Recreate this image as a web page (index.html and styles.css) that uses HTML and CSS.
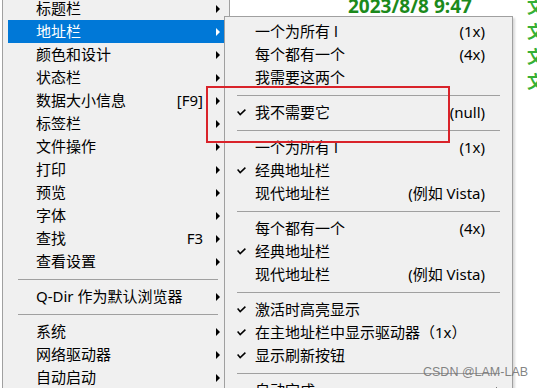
FILE: index.html
```html
<!DOCTYPE html>
<html lang="zh-CN">
<head>
    <meta charset="UTF-8">
    <title>Q-Dir 菜单</title>
    <link rel="stylesheet" href="styles.css">
</head>
<body>
    <div class="window">
        <div class="file-list">
            <div class="file-row"><span class="date">2023/8/8 9:47</span><span class="type">文</span></div>
            <div class="file-row"><span class="date"></span><span class="type">文</span></div>
            <div class="file-row"><span class="date"></span><span class="type">文</span></div>
            <div class="file-row"><span class="date"></span><span class="type">文</span></div>
        </div>

        <div class="menu main-menu">
            <div class="item"><span class="label">标题栏</span><span class="arrow"></span></div>
            <div class="item active"><span class="label">地址栏</span><span class="arrow"></span></div>
            <div class="item"><span class="label">颜色和设计</span><span class="arrow"></span></div>
            <div class="item"><span class="label">状态栏</span><span class="arrow"></span></div>
            <div class="item"><span class="label">数据大小信息</span><span class="key">[F9]</span><span class="arrow"></span></div>
            <div class="item"><span class="label">标签栏</span><span class="arrow"></span></div>
            <div class="item"><span class="label">文件操作</span><span class="arrow"></span></div>
            <div class="item"><span class="label">打印</span><span class="arrow"></span></div>
            <div class="item"><span class="label">预览</span><span class="arrow"></span></div>
            <div class="item"><span class="label">字体</span><span class="arrow"></span></div>
            <div class="item"><span class="label">查找</span><span class="key">F3</span><span class="arrow"></span></div>
            <div class="item"><span class="label">查看设置</span><span class="arrow"></span></div>
            <div class="sep"></div>
            <div class="item"><span class="label">Q-Dir 作为默认浏览器</span><span class="arrow"></span></div>
            <div class="sep"></div>
            <div class="item"><span class="label">系统</span><span class="arrow"></span></div>
            <div class="item"><span class="label">网络驱动器</span><span class="arrow"></span></div>
            <div class="item"><span class="label">自动启动</span><span class="arrow"></span></div>
        </div>

        <div class="menu sub-menu">
            <div class="item"><span class="check"></span><span class="label">一个为所有 l</span><span class="key">(1x)</span><span class="arrow none"></span></div>
            <div class="item"><span class="check"></span><span class="label">每个都有一个</span><span class="key">(4x)</span><span class="arrow none"></span></div>
            <div class="item"><span class="check"></span><span class="label">我需要这两个</span><span class="arrow none"></span></div>
            <div class="sep"></div>
            <div class="item"><span class="check on"><svg width="9" height="7" viewBox="0 0 9 7"><path d="M0.6 2.6 L3.2 5.6 L8.4 0.6" fill="none" stroke="#000" stroke-width="1.5"/></svg></span><span class="label">我不需要它</span><span class="key">(null)</span><span class="arrow none"></span></div>
            <div class="sep"></div>
            <div class="item"><span class="check"></span><span class="label">一个为所有 l</span><span class="key">(1x)</span><span class="arrow none"></span></div>
            <div class="item"><span class="check on"><svg width="9" height="7" viewBox="0 0 9 7"><path d="M0.6 2.6 L3.2 5.6 L8.4 0.6" fill="none" stroke="#000" stroke-width="1.5"/></svg></span><span class="label">经典地址栏</span><span class="arrow none"></span></div>
            <div class="item"><span class="check"></span><span class="label">现代地址栏</span><span class="key">(例如 Vista)</span><span class="arrow none"></span></div>
            <div class="sep"></div>
            <div class="item"><span class="check"></span><span class="label">每个都有一个</span><span class="key">(4x)</span><span class="arrow none"></span></div>
            <div class="item"><span class="check on"><svg width="9" height="7" viewBox="0 0 9 7"><path d="M0.6 2.6 L3.2 5.6 L8.4 0.6" fill="none" stroke="#000" stroke-width="1.5"/></svg></span><span class="label">经典地址栏</span><span class="arrow none"></span></div>
            <div class="item"><span class="check"></span><span class="label">现代地址栏</span><span class="key">(例如 Vista)</span><span class="arrow none"></span></div>
            <div class="sep"></div>
            <div class="item"><span class="check on"><svg width="9" height="7" viewBox="0 0 9 7"><path d="M0.6 2.6 L3.2 5.6 L8.4 0.6" fill="none" stroke="#000" stroke-width="1.5"/></svg></span><span class="label">激活时高亮显示</span><span class="arrow none"></span></div>
            <div class="item"><span class="check on"><svg width="9" height="7" viewBox="0 0 9 7"><path d="M0.6 2.6 L3.2 5.6 L8.4 0.6" fill="none" stroke="#000" stroke-width="1.5"/></svg></span><span class="label">在主地址栏中显示驱动器（1x）</span><span class="arrow none"></span></div>
            <div class="item"><span class="check on"><svg width="9" height="7" viewBox="0 0 9 7"><path d="M0.6 2.6 L3.2 5.6 L8.4 0.6" fill="none" stroke="#000" stroke-width="1.5"/></svg></span><span class="label">显示刷新按钮</span><span class="arrow none"></span></div>
            <div class="sep"></div>
            <div class="item"><span class="check"></span><span class="label">自动完成</span><span class="arrow"></span></div>
        </div>

        <div class="mark"></div>
        <div class="watermark">CSDN @LAM-LAB</div>
    </div>
</body>
</html>
```

FILE: styles.css
```css
body {
    margin: 0;
    background: #fff;
    font-family: 'Noto Sans', 'Noto Sans CJK SC', sans-serif;
    overflow: hidden;
}
.window {
    position: relative;
    width: 537px;
    height: 388px;
    overflow: hidden;
    background: #fff;
}

/* file list behind the menus */
.file-list {
    display: flex;
    flex-direction: column;
    padding-left: 348px;
    margin-top: -7px;
}
.file-row {
    display: flex;
    height: 25px;
    align-items: center;
}
.date {
    width: 179px;
    flex-shrink: 0;
    font-weight: bold;
    font-size: 19px;
    color: #1c8a1c;
}
.type {
    flex-shrink: 0;
    font-size: 17px;
    font-weight: bold;
    color: #35b035;
}

/* menus */
.menu {
    position: absolute;
    background: #f0f0f0;
    border: 1px solid #a0a0a0;
    font-size: 15px;
    color: #000;
}
.main-menu {
    left: 2px;
    top: -4px;
    width: 216px;
    padding: 0 5px;
}
.sub-menu {
    left: 224px;
    top: 16px;
    width: 277px;
    padding: 3px 5px;
    box-shadow: 2px 2px 2px rgba(0,0,0,0.15);
}
.item {
    display: flex;
    align-items: center;
    height: 23px;
    line-height: 23px;
    white-space: nowrap;
}
.main-menu .item {
    padding-left: 28px;
}
.item.active {
    background: #0078d7;
    color: #fff;
}
.item .label {
    flex-grow: 1;
}
.item .key {
    text-align: right;
}
.item .arrow {
    width: 17px;
    height: 23px;
    display: flex;
    align-items: center;
    justify-content: flex-end;
    margin-right: 4px;
}
.item .arrow::after {
    content: '';
    border-left: 4px solid #000;
    border-top: 4px solid transparent;
    border-bottom: 4px solid transparent;
}
.item.active .arrow::after {
    border-left-color: #fff;
}
.item .arrow.none::after {
    display: none;
}
.sub-menu .item .arrow {
    width: 15px;
    margin-right: 7px;
}
.check {
    width: 25px;
    display: flex;
    align-items: center;
    padding-left: 7px;
    box-sizing: border-box;
}
.check svg {
    display: block;
    margin-top: -1px;
}
.sep {
    height: 12px;
    display: flex;
    align-items: center;
}
.sep::before {
    content: '';
    flex-grow: 1;
    border-top: 1px solid #a0a0a0;
}
.main-menu .sep {
    margin: 0 6px 0 10px;
}
.sub-menu .sep {
    margin: 0 7px;
}

/* annotation overlay */
.mark {
    position: absolute;
    left: 206px;
    top: 86px;
    width: 240px;
    height: 53px;
    border: 2px solid #d9232a;
}
.watermark {
    position: absolute;
    left: 423px;
    top: 365px;
    font-family: 'Liberation Sans', sans-serif;
    font-size: 12.5px;
    color: rgba(110,110,110,0.85);
}
```
